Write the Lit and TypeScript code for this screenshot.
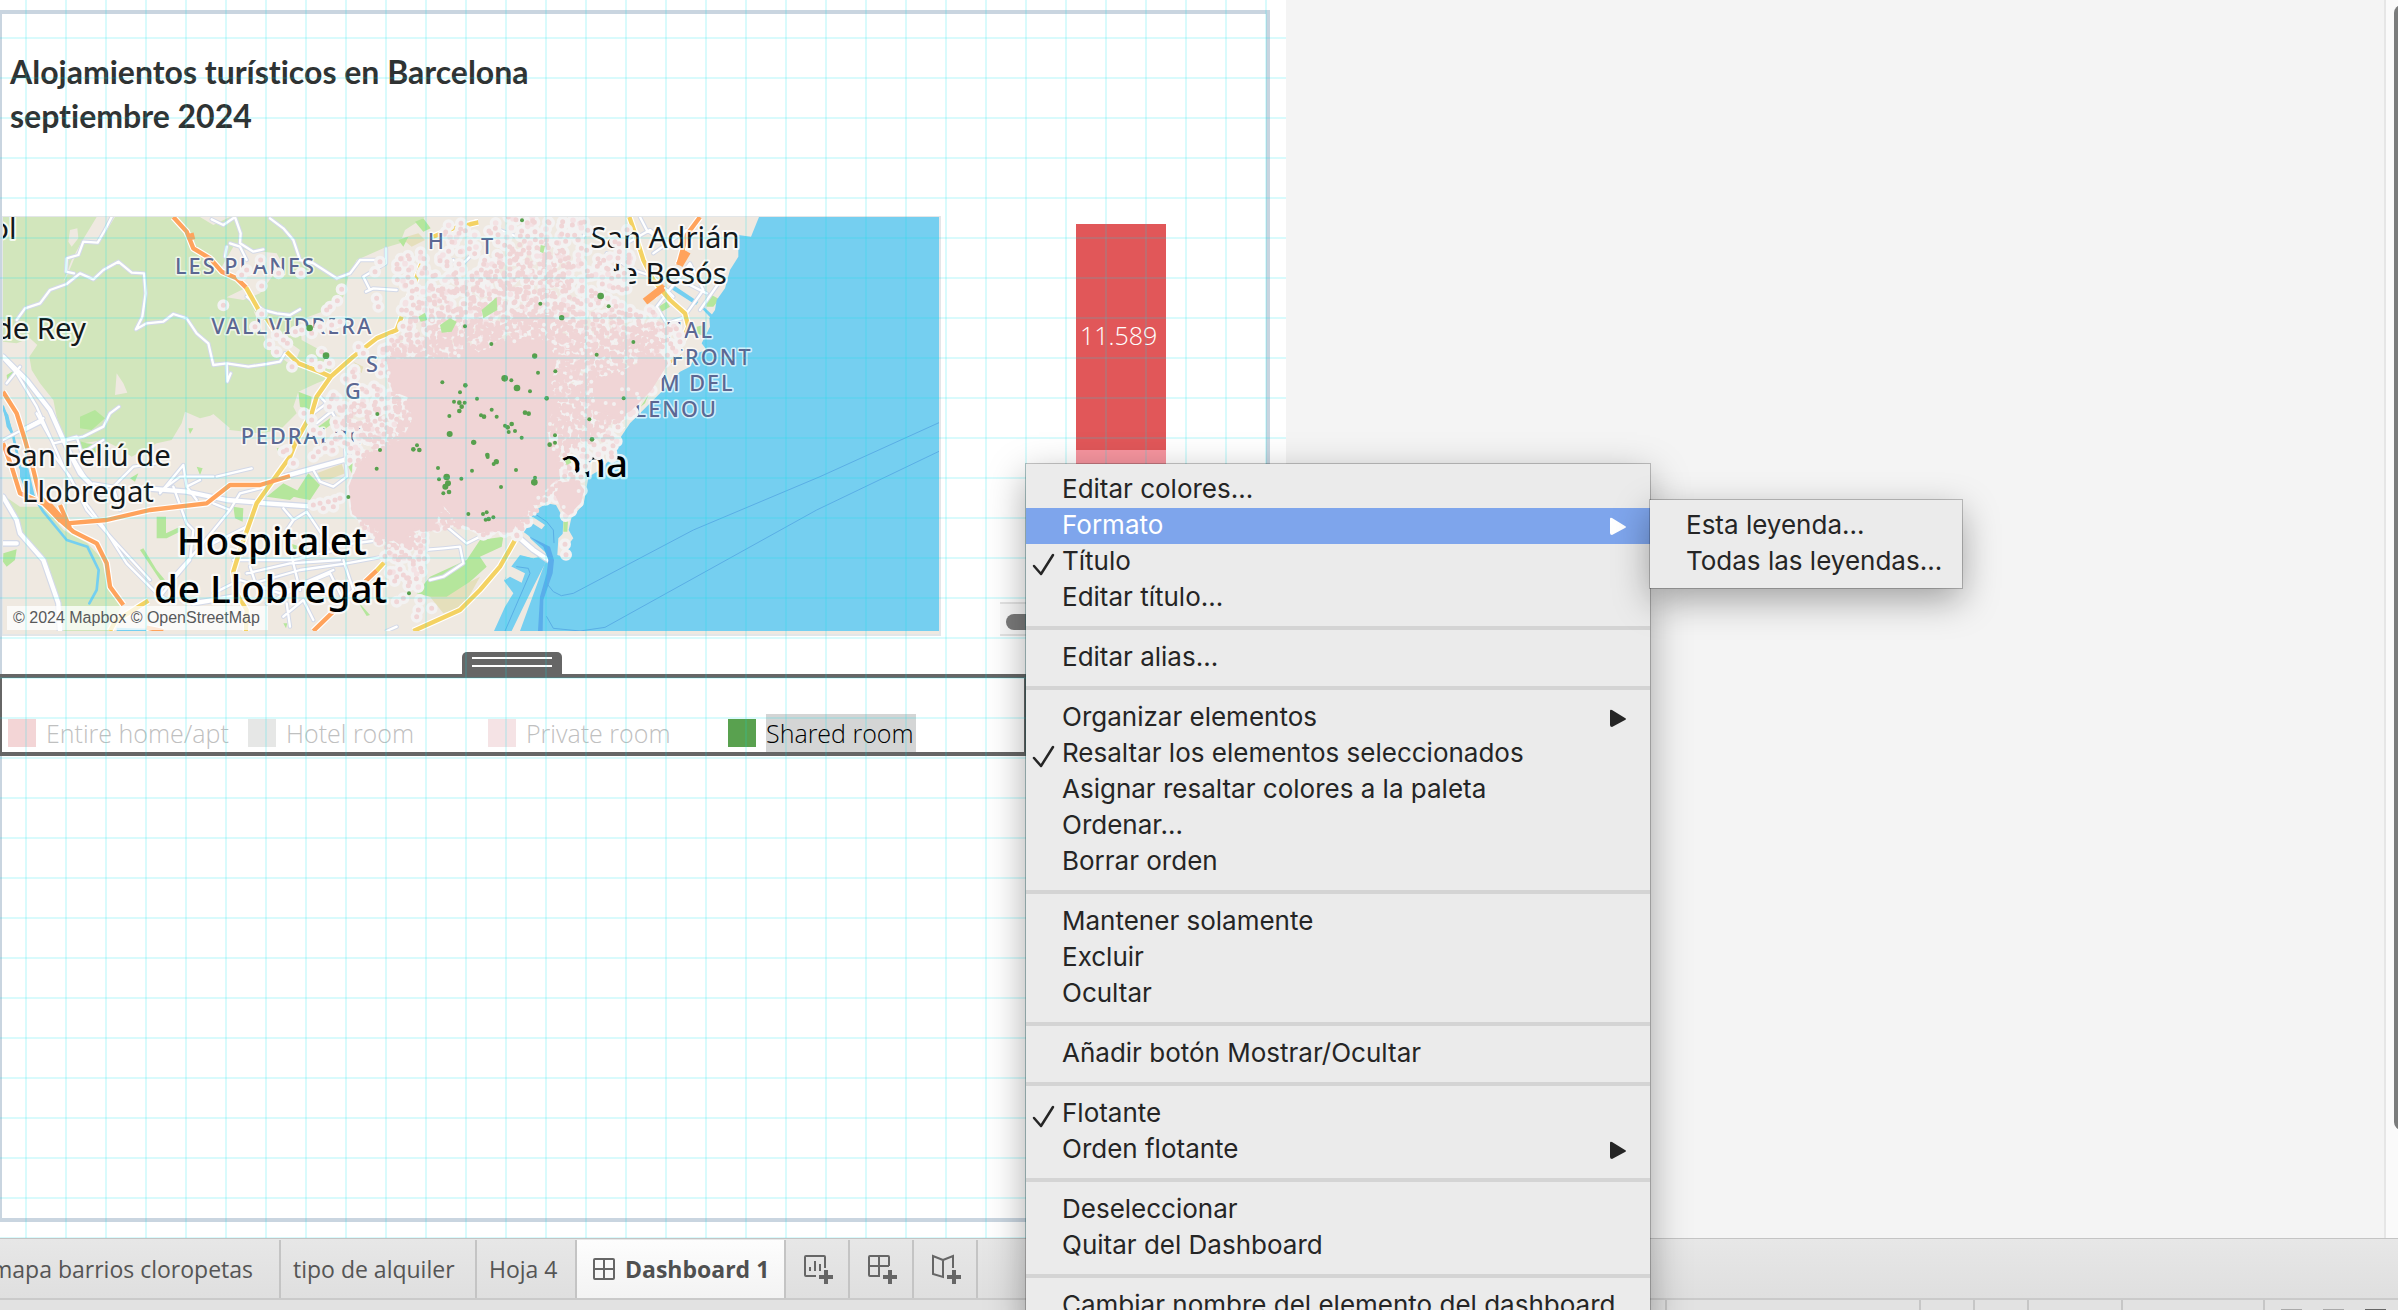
import { LitElement, html, svg, css, nothing } from "lit";
import { customElement, property } from "lit/decorators.js";
import { classMap } from "lit/directives/class-map.js";

type Pt = [number, number];

interface MenuEntry {
  label: string;
  checked?: boolean;
  submenu?: boolean;
  active?: boolean;
}

/* ---------- map data (map units: three per screen pixel) ---------- */

const CLUSTER: Pt[] = [
  [1350, 21], [1470, 60], [1500, 21], [1760, 21], [1770, 130], [1880, 40], [1900, 200], [1880, 290], [1950, 300], [2035, 350],
  [2050, 390], [2000, 470], [1965, 530], [1910, 600], [1855, 680], [1835, 740], [1780, 785], [1750, 830], [1745, 880],
  [1700, 925], [1670, 870], [1620, 890], [1575, 950], [1560, 980], [1410, 975], [1340, 930], [1290, 975], [1270, 1060],
  [1280, 1110], [1250, 1150], [1170, 1120], [1150, 1040], [1120, 975], [1060, 930], [1050, 830], [1060, 760], [990, 740],
  [1000, 640], [980, 560], [1040, 500], [1120, 430], [1190, 370], [1210, 260], [1180, 190], [1200, 120], [1310, 130],
];
const DENSE: Pt[] = [
  [1280, 250], [1420, 200], [1560, 90], [1700, 120], [1740, 300], [1900, 310], [2010, 350], [1990, 450], [1950, 520], [1890, 600],
  [1820, 690], [1740, 720], [1740, 870], [1700, 910], [1660, 850], [1560, 965], [1410, 965], [1340, 910], [1280, 970],
  [1240, 1050], [1170, 1040], [1110, 970], [1050, 910], [1060, 800], [1090, 700], [1010, 610], [1060, 560], [1120, 600],
  [1190, 560], [1150, 450], [1200, 380],
];
const THICK: Pt[] = [
  [1180, 420], [1260, 400], [1300, 350], [1420, 340], [1500, 330], [1600, 300], [1720, 340], [1760, 400], [1900, 350],
  [2000, 370], [1990, 450], [1940, 520], [1870, 610], [1800, 670], [1720, 700], [1680, 740], [1640, 850], [1560, 960],
  [1400, 960], [1280, 960], [1230, 1020], [1170, 1010], [1060, 900], [1060, 800], [1120, 720], [1200, 660], [1230, 600], [1160, 500],
];
const CORE: Pt[] = [
  [1165, 455], [1250, 445], [1330, 450], [1440, 430], [1500, 405], [1560, 390], [1640, 395], [1665, 450], [1650, 520],
  [1660, 590], [1635, 650], [1645, 700], [1670, 730], [1675, 800], [1640, 830], [1590, 890], [1540, 950], [1440, 965], [1370, 930],
  [1330, 880], [1300, 940], [1240, 960], [1200, 1000], [1140, 960], [1060, 910], [1050, 830], [1080, 760], [1140, 720],
  [1210, 690], [1240, 630], [1230, 560], [1180, 540],
];
const BEACH: Pt[] = [[1680, 822], [1730, 815], [1748, 840], [1740, 875], [1705, 912], [1690, 900], [1672, 860]];
const EAST: Pt[] = [[1780, 510], [1860, 490], [1960, 440], [2000, 460], [1950, 540], [1890, 600], [1850, 620], [1790, 600]];

/* Areas kept clear of listings: x, y, width, height. */
const CLEAR: [number, number, number, number][] = [
  [1275, 65, 48, 70], [1435, 75, 48, 68], [1700, 730, 40, 30], [1715, 755, 35, 22], [1725, 790, 12, 20], [1768, 740, 60, 70],
  [1775, 55, 50, 70], [1085, 435, 50, 55], [1030, 515, 42, 55],
];

const OUTLIERS: Pt[] = [
  [670, 286], [785, 228], [740, 180], [725, 195], [782, 150], [836, 190], [903, 190], [785, 312], [765, 350], [830, 375],
  [850, 390], [862, 400], [808, 403], [830, 426], [886, 365], [905, 360], [935, 370], [960, 350], [995, 345], [1020, 335],
  [965, 425], [935, 450], [988, 460], [876, 470], [960, 470], [1025, 238], [1012, 272], [990, 290], [980, 300], [1075, 410],
  [1130, 265], [1135, 290], [1140, 155], [1125, 185], [1205, 300], [912, 610], [935, 630], [940, 660], [960, 670], [880, 760],
  [850, 725], [860, 720], [940, 740], [955, 725], [975, 715], [940, 885], [960, 880], [985, 875], [1005, 870], [1020, 865],
  [970, 895], [1000, 890], [1170, 1085], [1190, 1100], [1210, 1095], [1265, 1085], [1190, 1175], [1210, 1165], [1260, 1170],
  [1255, 1200], [1295, 1195], [1250, 1220], [1695, 1003], [1698, 1034], [1845, 95], [1858, 125], [1820, 175],
  [1800, 255], [1835, 740], [1550, 975], [1565, 945], [1090, 430], [1160, 420],
];
const GREEN_DOTS: [number, number, number][] = [
  [929, 354, 10], [978, 437, 10], [1395, 349, 6], [1327, 517, 6], [1396, 526, 7], [1380, 547, 6], [1431, 566, 6], [1362, 575, 6],
  [1378, 578, 7], [1394, 578, 6], [1385, 590, 7], [1378, 603, 7], [1348, 618, 6], [1132, 612, 6], [1349, 672, 9], [1251, 706, 6],
  [1240, 718, 7], [1258, 720, 7], [1140, 720, 6], [1421, 697, 8], [1130, 776, 6], [1314, 774, 6], [1416, 782, 6], [1340, 801, 10],
  [1344, 820, 9], [1336, 830, 9], [1317, 808, 6], [1384, 806, 6], [1330, 850, 6], [1347, 846, 7], [1045, 861, 6], [1405, 912, 6],
  [1227, 1150, 6], [1566, 31, 6], [1802, 258, 10], [1826, 289, 6], [1621, 281, 6], [1685, 323, 8], [1474, 402, 6], [1604, 438, 8],
  [1900, 396, 6], [1790, 434, 6], [1614, 488, 6], [1666, 484, 6], [1514, 505, 10], [1534, 511, 6], [1551, 534, 10], [1590, 544, 6],
  [1640, 565, 7], [1871, 565, 6], [1575, 608, 7], [1586, 611, 7], [1475, 599, 6], [1443, 616, 6], [1452, 620, 7], [1490, 620, 6],
  [1768, 628, 6], [1515, 647, 6], [1523, 652, 7], [1535, 642, 7], [1526, 666, 6], [1545, 663, 6], [1565, 683, 6], [1665, 676, 6],
  [1649, 704, 7], [1665, 698, 6], [1776, 688, 7], [1462, 735, 7], [1463, 741, 6], [1489, 755, 8], [1481, 762, 6], [1548, 780, 6],
  [1603, 817, 10], [1605, 803, 6], [1503, 831, 6], [1449, 912, 6], [1460, 907, 6], [1480, 922, 6], [1457, 929, 6], [1466, 927, 7],
];

const inside = (poly: Pt[], x: number, y: number): boolean => {
  let hit = false;
  for (let i = 0, j = poly.length - 1; i < poly.length; j = i++) {
    const [xi, yi] = poly[i];
    const [xj, yj] = poly[j];
    if (yi > y !== yj > y && x < ((xj - xi) * (y - yi)) / (yj - yi) + xi) hit = !hit;
  }
  return hit;
};

const isClear = (x: number, y: number): boolean =>
  CLEAR.some(([cx, cy, w, h]) => x > cx - 6 && x < cx + w + 6 && y > cy - 6 && y < cy + h + 6);

/* Small seeded generator, so that the listing cloud is stable between renders. */
const seeded = (seed: number) => () => {
  seed = (seed * 1664525 + 1013904223) % 4294967296;
  return seed / 4294967296;
};

const scatter = (poly: Pt[], step: number, seed: number): Pt[] => {
  const rnd = seeded(seed);
  const out: Pt[] = [];
  for (let y = 21; y < 1240; y += step) {
    for (let x = 900; x < 2080; x += step) {
      const px = Math.round(x + (rnd() - 0.5) * step * 1.9);
      const py = Math.round(y + (rnd() - 0.5) * step * 1.9);
      if (inside(poly, px, py) && !isClear(px, py)) out.push([px, py]);
    }
  }
  return out;
};

const toDots = (pts: Pt[]) => pts.map(([x, y]) => `M${x} ${y}h0`).join("");
const toShape = (pts: Pt[]) => `M${pts.map((p) => p.join(" ")).join("L")}Z`;

const SPARSE_PTS = scatter(CLUSTER, 23, 7);
const DENSE_PTS = scatter(DENSE, 19, 21);
const THICK_PTS = scatter(THICK, 14, 55);
const SPECK_PTS = scatter(DENSE, 48, 91).filter(([x, y]) => !inside(CORE, x, y));
const HALOS = toDots([...SPARSE_PTS, ...OUTLIERS]);
const PALE = toDots(SPARSE_PTS.filter((_, i) => i % 3 === 0));
const PINK = toDots([...SPARSE_PTS.filter((_, i) => i % 3 !== 0), ...OUTLIERS, ...DENSE_PTS, ...THICK_PTS]);
const SPECKS = toDots(SPECK_PTS);

const FOREST =
  "M9 21H1275L1215 60L1200 100L1150 115L1070 150L1045 200L1030 260L980 300L900 330L905 390L960 420L990 470L1000 500L950 520L895 545L880 590L890 610L840 660L780 670L690 660L660 640L640 615L600 625L555 605L545 640L515 690L470 700L395 740L350 710L310 690L250 700L190 680L170 620L160 570L120 520L95 480L88 440L112 405L90 385L50 400L9 395Z" +
  "M9 855L60 890L130 890L190 960L262 1000L305 1045L325 1140L365 1185L330 1263H190L165 1170L135 1060L75 1000L50 930L9 880Z";
const CLEARINGS =
  "M290 21L345 21L300 95L255 98L225 140L200 200L190 215L215 150L245 95ZM210 60L232 55L235 85L215 110L205 95ZM700 110L740 120L830 130L850 165L820 195L780 250L730 270L680 262L735 235L700 195L660 180ZM350 490L370 520L382 548L345 555ZM555 610L600 640L640 612L690 655L660 680L600 690L555 660ZM760 300L830 370L900 420L880 470L840 440L800 400ZM600 21H690L640 45Z";
const PARKS =
  "M240 620L285 600L315 625L275 660L240 655ZM228 690L260 700L305 705L285 730L245 715ZM20 495L45 480L40 500L22 515ZM800 860L850 820L900 845L870 870ZM880 860L925 790L960 825L930 870L900 865ZM470 920H498V970L540 950L550 960L500 985H470ZM700 890L730 895L728 935L705 925ZM1245 35L1270 25L1292 55L1270 65ZM1195 90L1225 80L1210 110ZM895 545L935 560L930 600L900 590ZM955 650L990 625L998 640L965 665ZM830 715L870 708L865 735L840 740ZM1250 1150L1290 1100L1400 1050L1440 990L1510 980L1505 1010L1440 1040L1460 1070L1410 1115L1340 1160L1290 1160ZM2118 265L2135 255L2158 268L2140 290H2120ZM1975 290L2000 275L2010 290L1985 305ZM2090 350L2112 345L2116 380L2090 370ZM1922 590L1945 555L1935 580ZM1690 935L1704 932L1702 965L1690 965ZM590 770L608 775L600 795ZM430 1015L470 1080L495 1110L480 1110L420 1020ZM1070 1170L1110 1215L1100 1218ZM10 1030L50 1018L45 1050L20 1070L9 1055ZM565 655L580 655L570 672ZM850 1240L862 1240L858 1255ZM390 805L415 790L405 815ZM720 1020L740 1015L730 1040ZM870 1000L900 1010L890 1030Z";
const CITY_PARKS =
  "M1320 345L1350 325L1370 335L1355 365L1325 368ZM1255 320L1275 308L1282 330L1262 335ZM1445 300L1490 262L1492 300L1450 325ZM1622 105L1635 108L1630 130L1620 125ZM1045 770L1058 760L1055 790ZM1695 752L1708 745L1714 758L1700 765Z";
const PATCHES = "M950 790L1025 762L1035 790L990 808L960 810ZM1205 85L1255 70L1275 90L1235 110ZM1060 455L1090 470L1085 490ZM1290 1160L1410 1115L1440 1100L1390 1190L1330 1210Z";
const SEA =
  "M2277 21H2820V1263H1482L1515 1190L1540 1150L1512 1112L1530 1075L1560 1035L1600 1045L1590 980L1570 965L1600 905L1640 880L1668 885L1690 925L1688 975L1675 1020L1685 1040L1700 1010L1720 985L1706 960L1715 920L1750 885L1757 850L1765 800L1800 780L1838 740L1850 700L1890 640L1950 580L2000 530L2040 485L2070 470L2090 430L2120 420L2105 400L2130 350L2128 325L2145 300L2150 270L2175 235L2190 180L2215 140L2215 75L2253 80Z";
const QUAYS =
  "M1590 985L1645 1035L1625 1085L1560 1263H1535L1590 1150L1638 1055L1580 1010ZM1598 920L1635 945L1625 958L1590 935ZM1565 1000L1615 1042L1600 1045L1560 1032ZM1525 1065L1575 1090L1565 1118L1530 1100L1515 1110ZM1675 985L1690 970V1040L1672 1035Z";
const COAST_WATER =
  "M9 590L25 615L40 680L20 650ZM60 770L85 775L105 860L80 850L60 800ZM350 1253L445 1256L440 1263H350ZM2020 225L2095 275L2088 285L2010 235ZM2105 285L2145 322L2138 330L2105 295Z";

const MINOR =
  "M50 330L75 295L120 280L150 240L200 222L240 190L280 208L310 180L355 155L395 188L432 190L437 250L427 320L408 358L440 340L490 335L520 312L560 325L590 370L625 400L640 465L680 460L745 470L800 462L840 455L855 430M335 21L315 60L293 98L250 95L235 135L200 145L198 185L222 190M635 28L670 45L705 21L722 70L720 100L760 125L790 118M810 25L850 55L880 90L900 150L940 160L1010 205L1050 190L1080 150L1130 150M690 100L720 110L740 150M675 140L680 110M1098 245L1120 235L1190 240M1158 115V160L1090 200L1110 240M740 260L790 300L830 310L870 315L900 298M680 465L682 515L692 490M9 445L50 490L110 590L190 770L250 870L310 950L380 1060L470 1150L520 1180M20 520L60 470M110 610L160 700L250 680L310 650L330 610L357 590M9 690L130 625M190 690L230 680L245 730L310 690M280 820L340 830L400 770L470 760M150 720L210 800L260 900L340 990L450 1110M210 730L280 840M340 830L360 900M480 850L550 765L560 830L590 870M520 830L560 940L580 960L570 1050L520 1110L480 1160M650 800L755 775M600 810L560 830M480 845L540 800L640 800M640 880L690 900L720 850L800 830M690 900L600 1010L520 1100M940 780L960 815L1000 830L1040 800L1035 700M850 895L880 930L860 960L880 1060L900 1140M880 930L920 905L950 950L990 1010L1140 990M620 1010L740 950L760 900M750 1070L770 1130L860 1140M700 1050L880 1050L1010 1020M740 1090L870 1060L1020 1050M760 1120L900 1080L1040 1060L1150 1040M640 1150L720 1110L840 1150L1000 1080M860 1180L870 1250M800 1180L920 1120L990 1090L1030 1170M850 1220L910 1170L940 1230M1160 1263L1190 1250M1030 1050L1060 1140L1010 1180M1270 1020L1330 1015L1380 1010L1390 1060L1330 1100L1290 1110M1340 950L1400 1000L1440 980M940 610L980 580L1010 630M950 640L1000 600M960 560L1000 600M1440 110L1380 170L1360 150M1500 60L1600 100M1760 60L1740 100M1820 130L1900 180L1960 200L2020 260M1880 100L1950 60L2000 100M1970 290L2070 160L2110 240L2060 310M1960 130L2060 60M1920 21L1940 60L2010 110M2100 300L2170 200M1970 290L2000 340L2060 320M2040 210L2120 250";
const WHITE_MAJOR =
  "M9 440L80 510L150 600L190 690L240 790L300 850M9 860L50 930L60 970L130 1050L175 1180L180 1263M120 635L70 660M440 835L560 845L680 870L800 880L940 890M850 800L940 775L1060 742M580 1180L700 1160L740 1170M9 1000L50 1000M1560 985L1600 1020L1645 1050";
const ORANGE =
  "M520 21L560 65L580 115L630 145L665 185L710 205L738 232M9 545L50 610L75 690L100 780L120 860L180 920L200 940L320 930L450 900L620 880L690 825L780 825L870 798M9 700L35 770L60 850L130 880L180 930L220 965L290 1000L320 1060L330 1130L370 1185M180 885L210 955M440 1253L490 1263M940 1263L1000 1205M1095 1115L1130 1082M2100 21L2060 75L2035 165M1960 260L1990 225";
const ORANGE_THICK = "M145 885L185 930M1935 275L1990 232M2038 165L2062 125M570 70L575 90";
const YELLOW =
  "M738 232L775 298M800 325L830 370M860 425L895 460L960 485L992 500L1060 440L1130 385L1190 360L1205 320M992 500L950 560L935 610L890 690L870 740L820 810L770 880L745 950L720 1020L700 1085L710 1150L740 1200L738 1263M1265 160L1240 230L1218 280M1300 80L1360 55L1435 37M1410 42L1435 37M330 1263L345 1235L445 1172M1130 1082L1152 1058M1240 1263L1380 1200L1440 1140L1500 1070L1548 985M1888 21L1905 70L1930 150L1960 210L2010 270L2055 310L2065 350L2045 400M2010 455L2040 430M1850 662L1868 645M1590 905L1600 900";
const RIVER = "M9 590L40 680L60 770L95 850L130 905L200 990L262 1010L296 1080L290 1140L268 1180";
const FERRY =
  "M2817 638L2460 800L2080 960L1720 1150L1684 1157L1660 1145L1640 1120M2817 724L2450 900L1815 1252L1740 1263L1660 1255L1640 1220M1595 905L1640 935L1660 960L1662 998M1550 1070L1585 1075L1590 1090L1515 1263";
const CHANNEL = "M1585 978L1650 1010L1662 1050L1658 1090L1630 1170L1628 1263H1614L1620 1160L1640 1090L1645 1050L1630 1010Z";

const mapDrawing = svg`
  <path class="forest" d=${FOREST} />
  <path class="land" d=${CLEARINGS} />
  <path class="patch" d=${PATCHES} />
  <path class="park" d=${PARKS} />
  <path class="sea" d=${SEA} />
  <path class="sea" d=${COAST_WATER} />
  <path class="land" d=${QUAYS} />
  <path class="river" d=${RIVER} />
  <path class="minor-case" d=${MINOR} />
  <path class="major-case" d=${WHITE_MAJOR} />
  <path class="minor" d=${MINOR} />
  <path class="major" d=${WHITE_MAJOR} />
  <path class="road-case" d=${YELLOW} />
  <path class="road-case" d=${ORANGE} />
  <path class="yellow" d=${YELLOW} />
  <path class="orange" d=${ORANGE} />
  <path class="orange-thick" d=${ORANGE_THICK} />
  <path class="channel" d=${CHANNEL} />
  <path class="ferry" d=${FERRY} />
  <g class="district">
    <text x="525" y="192">LES PLANES</text>
    <text x="634" y="372">VALLVIDRERA</text>
    <text x="722" y="703">PEDRALBES</text>
    <text x="2142" y="384" text-anchor="end">NAL</text>
    <text x="2258" y="464" text-anchor="end">FRONT</text>
    <text x="2204" y="543" text-anchor="end">M DEL</text>
    <text x="2154" y="622" text-anchor="end">LENOU</text>
  </g>
  <g class="town">
    <text x="50" y="88" text-anchor="end">ol</text>
    <text x="258" y="388" text-anchor="end">de Rey</text>
    <text x="264" y="768" text-anchor="middle">San Feliú de</text>
    <text x="264" y="876" text-anchor="middle">Llobregat</text>
    <text x="1995" y="114" text-anchor="middle">San Adrián</text>
    <text x="1995" y="222" text-anchor="middle">de Besós</text>
  </g>
  <g class="city">
    <text x="815" y="1035" text-anchor="middle">Hospitalet</text>
    <text x="812" y="1178" text-anchor="middle">de Llobregat</text>
    <text x="1884" y="802" text-anchor="end">Barcelona</text>
  </g>
  <path class="halo" d=${HALOS} />
  <path class="halo-fill" d=${toShape(CORE)} />
  <path class="pale" d=${PALE} />
  <path class="pink" d=${PINK} />
  <path class="mass" d=${toShape(CORE) + toShape(BEACH) + toShape(EAST)} />
  <path class="speck" d=${SPECKS} />
  <path class="park" d=${CITY_PARKS} />
  <g class="district">
    <text x="1098" y="486">S</text>
    <text x="1035" y="566">G</text>
    <text x="1283" y="116">H</text>
    <text x="1443" y="132">T</text>
  </g>
  ${GREEN_DOTS.map(([x, y, r]) => svg`<circle class="shared" cx=${x} cy=${y} r=${r} />`)}
`;

/* ---------- elements ---------- */

@customElement("listing-map")
class ListingMap extends LitElement {
  static styles = css`
    :host { display: block; position: relative; border: 1px solid #e3e6e8; border-width: 1px 2px 2px 1px; background: #efe9e1; font-family: "Noto Sans", "Open Sans", sans-serif; }
    svg { display: block; width: 100%; height: auto; }
    path { stroke-linejoin: round; stroke-linecap: round; fill: none; }
    path.forest { fill: #d2e6bc; }
    path.land { fill: #efe9e1; }
    path.patch { fill: #e5dfbb; }
    path.park { fill: #b5e69c; }
    path.sea { fill: #75cff0; }
    .river { stroke: #75cff0; stroke-width: 8; }
    .minor-case { stroke: #d3d9e8; stroke-width: 13; }
    .minor { stroke: #fff; stroke-width: 7; }
    .major-case { stroke: #d3d9e8; stroke-width: 20; }
    .major { stroke: #fff; stroke-width: 13; }
    .road-case { stroke: #fff; stroke-width: 20; stroke-linecap: butt; }
    .yellow { stroke: #f4d262; stroke-width: 13; stroke-linecap: butt; }
    .orange { stroke: #ffa35c; stroke-width: 13; stroke-linecap: butt; }
    .orange-thick { stroke: #ffa35c; stroke-width: 22; stroke-linecap: butt; }
    path.channel { fill: #5badea; }
    .ferry { stroke: #5aaee5; stroke-width: 3; }
    text { paint-order: stroke; stroke-linejoin: round; }
    .district { font-size: 65px; font-weight: 500; letter-spacing: 6px; fill: #5c6792; stroke: rgba(255, 255, 255, 0.7); stroke-width: 9px; }
    .town { font-size: 88px; fill: #14181a; stroke: rgba(255, 255, 255, 0.8); stroke-width: 12px; }
    .city { font-size: 116px; font-weight: 500; fill: #000; stroke: rgba(255, 255, 255, 0.8); stroke-width: 14px; }
    .halo { stroke: #f3f2f2; stroke-width: 36; }
    path.halo-fill { fill: #f3f2f2; stroke: #f3f2f2; stroke-width: 20; }
    .pale { stroke: #f4e2e4; stroke-width: 17; }
    .pink { stroke: #f0d5d6; stroke-width: 15; }
    path.mass { fill: #f0d5d6; stroke: #f0d5d6; stroke-width: 8; }
    .speck { stroke: #f3f0f0; stroke-width: 12; }
    .shared { fill: #57a04d; }
    .credit { position: absolute; left: 4px; bottom: 4px; padding: 0 8px 0 6px; background: rgba(255, 255, 255, 0.75); color: #58595b; font: 16px/24px "Liberation Sans", Arial, sans-serif; }
  `;

  render() {
    return html`
      <svg viewBox="9 21 2808 1242" role="img" aria-label="Barcelona">${mapDrawing}</svg>
      <div class="credit">© 2024 Mapbox © OpenStreetMap</div>
    `;
  }
}

@customElement("context-menu")
class ContextMenu extends LitElement {
  @property({ attribute: false }) groups: MenuEntry[][] = [];

  static styles = css`
    :host { display: block; padding: 8px 0; background: #ebebeb; box-shadow: 0 0 0 1px rgba(0, 0, 0, 0.22), 0 12px 36px rgba(0, 0, 0, 0.34); font-family: Inter, "Liberation Sans", sans-serif; color: #252525; }
    .group + .group { margin-top: 10px; border-top: 4px solid #d4d4d4; padding-top: 10px; }
    .item { display: grid; grid-template-columns: 24px 1fr 16px; align-items: center; gap: 6px; width: 100%; height: 36px; border: 0; padding: 0 24px 0 6px; background: none; color: inherit; font: 26px/34px Inter, "Liberation Sans", sans-serif; text-align: left; white-space: nowrap; }
    .item.active { background: #7ea5ec; color: #fff; }
    .label { padding-bottom: 2px; }
    svg { display: block; }
    .arrow { fill: currentColor; }
    .check { fill: none; stroke: currentColor; stroke-width: 2.5; stroke-linecap: round; stroke-linejoin: round; }
  `;

  render() {
    return this.groups.map(
      (group) => html`<div class="group" role="group">
        ${group.map(
          (item) => html`<button class=${classMap({ item: true, active: !!item.active })} role="menuitem">
            <span>${item.checked
              ? html`<svg class="check" width="24" height="36" viewBox="0 0 24 36"><path d="M2 22L9 30L21 11" /></svg>`
              : nothing}</span>
            <span class="label">${item.label}</span>
            ${item.submenu
              ? html`<svg class="arrow" width="16" height="20" viewBox="0 0 16 20"><path d="M0 3Q0 1 2 2L15 10Q17 11 15 12L2 19Q0 19 0 17Z" /></svg>`
              : nothing}
          </button>`,
        )}
      </div>`,
    );
  }
}

const MENU: MenuEntry[][] = [
  [
    { label: "Editar colores..." },
    { label: "Formato", submenu: true, active: true },
    { label: "Título", checked: true },
    { label: "Editar título..." },
  ],
  [{ label: "Editar alias..." }],
  [
    { label: "Organizar elementos", submenu: true },
    { label: "Resaltar los elementos seleccionados", checked: true },
    { label: "Asignar resaltar colores a la paleta" },
    { label: "Ordenar..." },
    { label: "Borrar orden" },
  ],
  [{ label: "Mantener solamente" }, { label: "Excluir" }, { label: "Ocultar" }],
  [{ label: "Añadir botón Mostrar/Ocultar" }],
  [{ label: "Flotante", checked: true }, { label: "Orden flotante", submenu: true }],
  [{ label: "Deseleccionar" }, { label: "Quitar del Dashboard" }],
  [{ label: "Cambiar nombre del elemento del dashboard" }],
];
const SUBMENU: MenuEntry[][] = [[{ label: "Esta leyenda..." }, { label: "Todas las leyendas..." }]];

const LEGEND = [
  { label: "Entire home/apt", tone: "entire" },
  { label: "Hotel room", tone: "hotel" },
  { label: "Private room", tone: "private" },
  { label: "Shared room", tone: "shared" },
];

const plus = svg`<path class="solid" d="M20 15h4v5h5v4h-5v5h-4v-5h-5v-4h5z" />`;
const gridIcon = html`<svg width="22" height="22" viewBox="0 0 22 22" aria-hidden="true"><rect x="1" y="1" width="20" height="20" rx="1" /><path d="M11 1v20M1 11h20" /></svg>`;
const NEW_BUTTONS = [
  { label: "Nueva hoja de trabajo", icon: svg`<path d="M21 13V2Q21 1 20 1H2Q1 1 1 2V20Q1 21 2 21H12M6 12v4M11 6v10M16 9v7" />${plus}` },
  { label: "Nuevo dashboard", icon: svg`<path d="M21 11V2Q21 1 20 1H2Q1 1 1 2V20Q1 21 2 21H11V1M1 11H21" />${plus}` },
  { label: "Nueva historia", icon: svg`<path d="M11 5L1 1V19L11 22ZM11 5L21 1V13" />${plus}` },
];

@customElement("app-root")
class AppRoot extends LitElement {
  static styles = css`
    :host { display: block; position: relative; height: 100vh; overflow: hidden; background: #f4f4f4; font-family: "Open Sans", "Noto Sans", sans-serif; color: #333; }
    * { box-sizing: border-box; }
    .app { display: grid; grid-template-rows: minmax(0, 1fr) 62px 10px; height: 100%; }
    .workspace { display: flex; justify-content: space-between; min-height: 0; }
    .canvas { position: relative; flex: 0 0 1286px; display: flex; padding: 10px 16px 16px 0; background: #fff; }
    .canvas::after { content: ""; position: absolute; inset: 0; pointer-events: none; background-image: linear-gradient(90deg, rgba(0, 225, 235, 0.15) 2px, transparent 2px), linear-gradient(rgba(0, 225, 235, 0.15) 2px, transparent 2px); background-size: 40px 40px; background-position: 25px 37px; }
    .dashboard { flex: 1; display: flex; flex-direction: column; border: 4px solid #c9d5e0; border-left-width: 2px; }
    .title { margin: 0; padding: 36px 8px 0; height: 202px; font: 700 32px/44px Lato, "Open Sans", sans-serif; font-variant-ligatures: none; color: #2f3333; }
    .row { display: flex; }
    .map { width: 939px; }
    .chart { display: flex; flex-direction: column; justify-content: space-between; flex: 1; margin-left: 59px; height: 420px; padding-top: 8px; overflow: hidden; }
    .bar { width: 90px; margin-left: 76px; }
    .bar .red { display: flex; align-items: center; padding: 0 0 4px 4px; height: 226px; background: #e15759; color: #fff; font-size: 25px; font-weight: 300; }
    .bar .rose { height: 60px; background: #f7959f; }
    .track { width: 100%; height: 34px; border: 2px solid #e4e4e4; border-width: 2px 0; background: #fafafa; padding: 10px 6px; }
    .thumb { height: 16px; width: 160px; border-radius: 8px; background: #7b7b7b; }
    .legend { position: relative; margin: 38px -4px 0 -2px; width: 1026px; height: 82px; border: 4px solid #666; border-width: 4px 2px; padding: 36px 0 0 4px; }
    .handle { position: absolute; left: 460px; bottom: 74px; width: 100px; height: 26px; border-radius: 5px 5px 0 0; background: #666; padding: 5px 10px; display: flex; flex-direction: column; gap: 6px; border: 0; }
    .handle i { width: 80px; height: 2px; background: #fff; }
    .keys { display: grid; grid-template-columns: repeat(4, 240px); margin: 0; padding: 0 0 0 2px; list-style: none; }
    .key { display: flex; align-items: center; gap: 10px; height: 38px; font-size: 25px; font-weight: 300; line-height: 38px; color: #bfc0c0; white-space: nowrap; }
    .swatch { width: 28px; height: 28px; }
    .swatch.entire { background: #f3d5d6; }
    .swatch.hotel { background: #e6e7e6; }
    .swatch.private { background: #f5e3e5; }
    .swatch.shared { background: #59a14f; }
    .picked .name { padding-right: 2px; background: #d4d5d5; color: #000; }
    .scroll { flex: 0 0 14px; border-left: 2px solid #e6e6e6; background: #fafafa; padding: 5px 0 0 8px; overflow: hidden; }
    .scroll div { width: 16px; height: 1125px; border-radius: 8px; background: #7b7c7c; }
    .tabs { display: flex; align-items: stretch; border-top: 1px solid #c4c4c4; border-bottom: 2px solid #cacaca; background: linear-gradient(#e7e7e7, #dfdfdf); padding-top: 1px; }
    .tab { display: flex; align-items: center; gap: 10px; border: 0; border-right: 2px solid #c4c4c4; padding: 0 0 0 12px; background: none; color: #555; font: 23px/32px "Open Sans", "Noto Sans", sans-serif; white-space: nowrap; overflow: hidden; }
    .tab.first { width: 281px; justify-content: flex-end; padding-right: 26px; }
    .tab.type { width: 196px; }
    .tab.sheet { width: 100px; }
    .tab.current { width: 209px; padding-left: 16px; background: linear-gradient(#fdfdfd, #f3f3f3); font-weight: 700; color: #4f5050; }
    .tab.new { width: 64px; padding: 2px 0 0 18px; }
    .tabs svg { flex: none; fill: none; stroke: #666; stroke-width: 2; overflow: visible; }
    .tabs .solid { fill: #666; stroke: none; }
    .status { display: flex; justify-content: flex-end; background: #e2e2e2; }
    .status span { border-left: 2px solid #c6c6c6; }
    .s1 { width: 254px; } .s2 { width: 54px; } .s3 { width: 54px; } .s4 { width: 94px; } .s5 { width: 142px; }
    .s6 { display: flex; align-items: flex-end; gap: 21px; width: 135px; padding-left: 16px; }
    .s6 b { width: 21px; height: 1px; background: #aaa; }
    .s6 b:last-child { background: #666; }
    .menu { position: absolute; left: 1026px; top: 464px; width: 624px; }
    .submenu { position: absolute; left: 1650px; top: 500px; width: 312px; }
  `;

  render() {
    return html`
      <div class="app">
        <main class="workspace">
          <section class="canvas">
            <div class="dashboard">
              <h1 class="title">Alojamientos turísticos en Barcelona<br />septiembre 2024</h1>
              <div class="row">
                <listing-map class="map"></listing-map>
                <div class="chart">
                  <div class="bar">
                    <div class="red">11.589</div>
                    <div class="rose"></div>
                  </div>
                  <div class="track"><div class="thumb"></div></div>
                </div>
              </div>
              <div class="legend">
                <button class="handle" aria-label="Mover"><i></i><i></i></button>
                <ul class="keys">
                  ${LEGEND.map(
                    (k) => html`<li class=${classMap({ key: true, picked: k.tone === "shared" })}>
                      <span class="swatch ${k.tone}"></span><span class="name">${k.label}</span>
                    </li>`,
                  )}
                </ul>
              </div>
            </div>
          </section>
          <div class="scroll"><div></div></div>
        </main>
        <nav class="tabs">
          <button class="tab first">mapa barrios cloropetas</button>
          <button class="tab type">tipo de alquiler</button>
          <button class="tab sheet">Hoja 4</button>
          <button class="tab current">${gridIcon}<span>Dashboard 1</span></button>
          ${NEW_BUTTONS.map(
            (b) => html`<button class="tab new" aria-label=${b.label}>
              <svg width="30" height="30" viewBox="0 0 30 30" aria-hidden="true">${b.icon}</svg>
            </button>`,
          )}
        </nav>
        <footer class="status">
          <span class="s1"></span><span class="s2"></span><span class="s3"></span><span class="s4"></span><span class="s5"></span>
          <span class="s6"><b></b><b></b><b></b></span>
        </footer>
      </div>
      <context-menu class="menu" role="menu" .groups=${MENU}></context-menu>
      <context-menu class="submenu" role="menu" .groups=${SUBMENU}></context-menu>
    `;
  }
}
